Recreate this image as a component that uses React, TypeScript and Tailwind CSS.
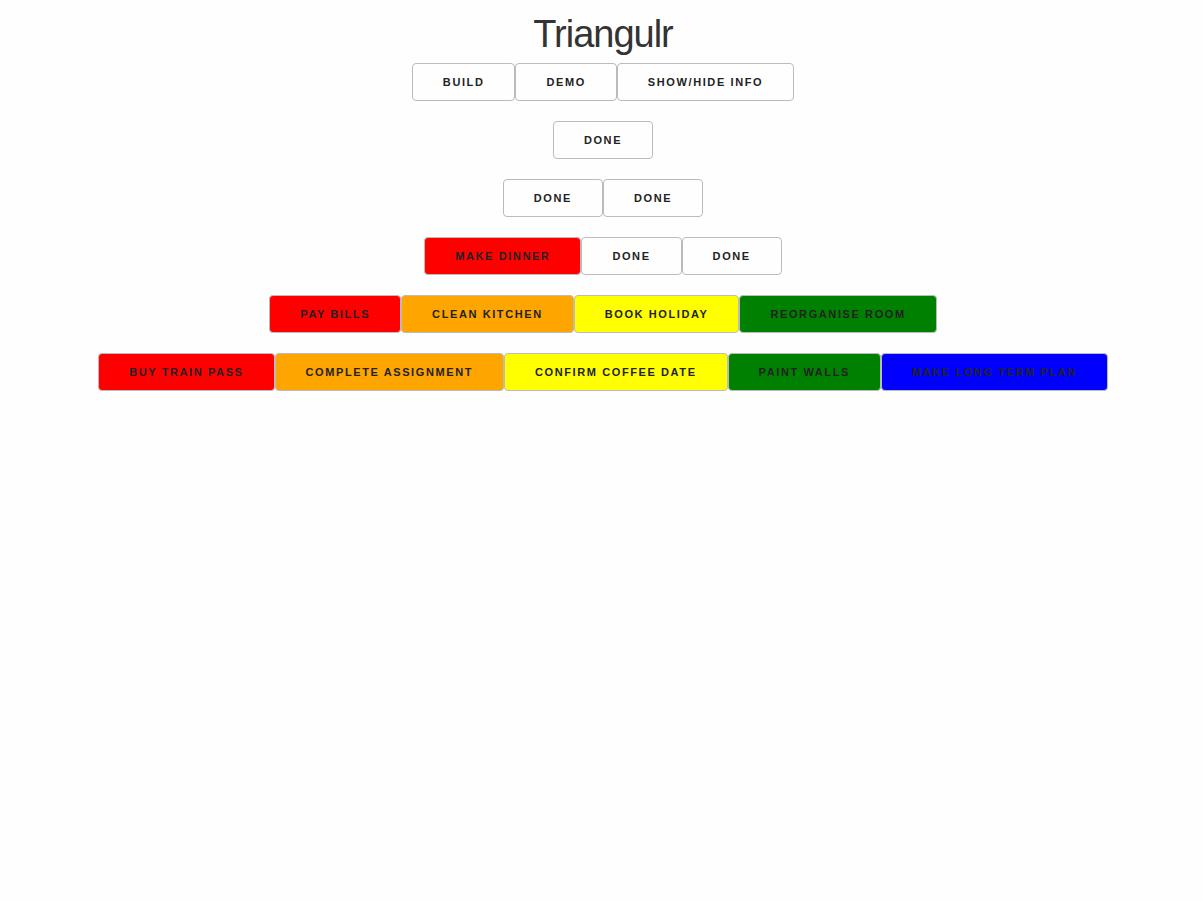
const colors: Record<string, string> = {
  red: 'bg-[#ff0000]',
  orange: 'bg-[#ffa500]',
  yellow: 'bg-[#ffff00]',
  green: 'bg-[#008000]',
  blue: 'bg-[#0000ff]',
  none: 'bg-transparent',
};

type Task = { label: string; color: keyof typeof colors };

const rows: Task[][] = [
  [{ label: 'Done', color: 'none' }],
  [
    { label: 'Done', color: 'none' },
    { label: 'Done', color: 'none' },
  ],
  [
    { label: 'Make dinner', color: 'red' },
    { label: 'Done', color: 'none' },
    { label: 'Done', color: 'none' },
  ],
  [
    { label: 'Pay bills', color: 'red' },
    { label: 'Clean kitchen', color: 'orange' },
    { label: 'Book holiday', color: 'yellow' },
    { label: 'Reorganise room', color: 'green' },
  ],
  [
    { label: 'Buy train pass', color: 'red' },
    { label: 'Complete assignment', color: 'orange' },
    { label: 'Confirm coffee date', color: 'yellow' },
    { label: 'Paint walls', color: 'green' },
    { label: 'Make long term plan', color: 'blue' },
  ],
];

function Button({ children, color = 'none' }: { children: string; color?: keyof typeof colors }) {
  return (
    <button
      className={`h-[38px] rounded-[4px] border border-[#bbb] px-[30px] text-[11px] font-bold uppercase leading-[36px] tracking-[1.6px] text-[#222] ${colors[color]}`}
    >
      {children}
    </button>
  );
}

export default function App() {
  return (
    <div
      className="min-h-[901px] bg-[#fefefe] pl-[3px] pt-[10px] text-[#222]"
      style={{ fontFamily: '"Liberation Sans", Arial, sans-serif' }}
    >
      <h1 className="text-center text-[38px] font-normal leading-[48px] tracking-[-1px] text-[#333]">Triangulr</h1>
      <div className="mt-[5px] flex flex-col items-center gap-[20px]">
        <div className="flex">
          <Button>Build</Button>
          <Button>Demo</Button>
          <Button>Show/hide info</Button>
        </div>
        {rows.map((row, i) => (
          <div key={i} className="flex">
            {row.map((t, j) => (
              <Button key={j} color={t.color}>
                {t.label}
              </Button>
            ))}
          </div>
        ))}
      </div>
    </div>
  );
}
